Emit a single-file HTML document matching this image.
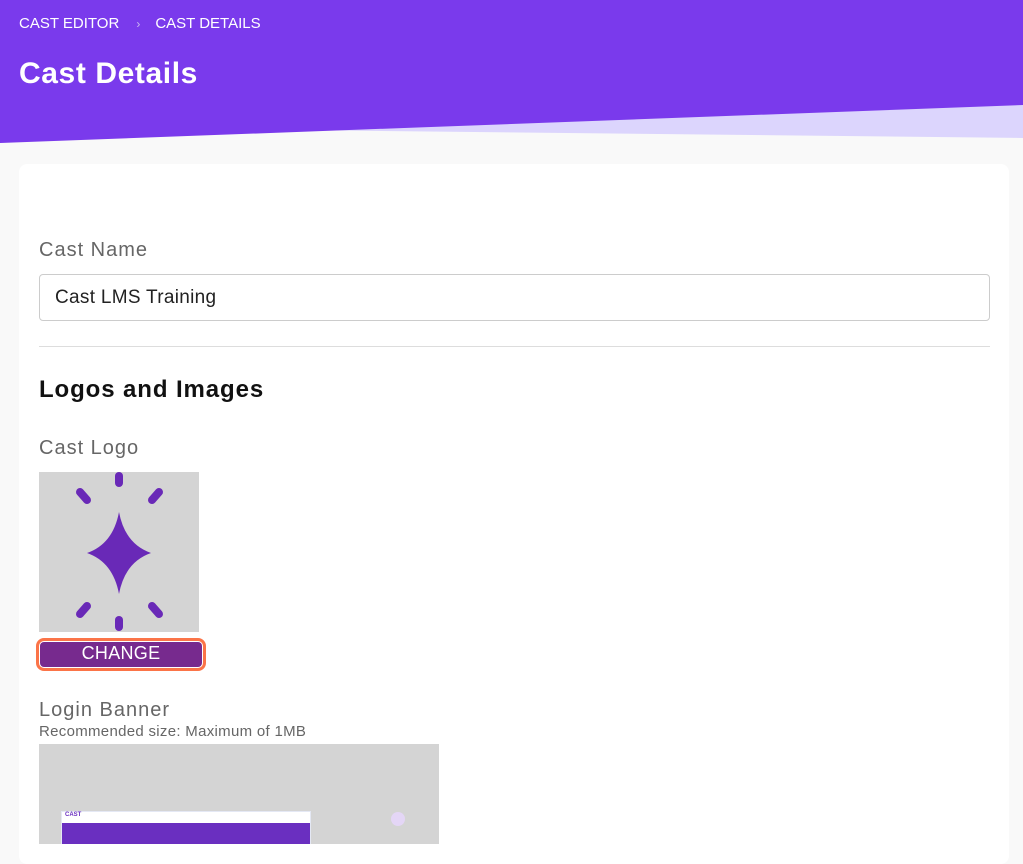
<!DOCTYPE html>
<html><head><style>
*{box-sizing:border-box;margin:0;padding:0}
body{width:1023px;height:843px;overflow:hidden;background:#f9f9f9;font-family:"Liberation Sans",sans-serif;position:relative}
.hdr{position:absolute;left:0;top:0;width:1023px;height:150px}
.bc{position:absolute;left:19px;top:15px;color:#fff;font-size:15px;letter-spacing:0}
.bc span{color:#c9b8f0;margin:0 15px 0 17px;font-size:12px}
h1{position:absolute;left:19px;top:57px;color:#fff;font-size:30px;font-weight:bold;letter-spacing:0.6px}
.card{position:absolute;left:19px;top:164px;width:990px;height:700px;background:#fff;border-radius:8px}
.lbl{position:absolute;left:39px;color:#666;font-size:20px;letter-spacing:1px}
.inp{position:absolute;left:39px;top:274px;width:951px;height:47px;border:1px solid #ccc;border-radius:4px;padding:0 15px;line-height:45px;font-size:19px;color:#222;letter-spacing:0.3px}
.hr{position:absolute;left:39px;top:346px;width:951px;height:1px;background:#ddd}
h2{position:absolute;left:39px;top:376px;font-size:24px;font-weight:bold;color:#111;letter-spacing:0.9px}
.logo{position:absolute;left:39px;top:472px;width:160px;height:160px;background:#d4d4d4}
.btn{position:absolute;left:36px;top:638px;width:170px;height:33px;border:3px solid #fb7448;border-radius:8px;padding:1px}
.btn div{background:#772a8e;width:100%;height:100%;border-radius:4px;color:#fff;font-size:18px;text-align:center;line-height:23px;letter-spacing:0.3px}
.banner{position:absolute;left:39px;top:744px;width:400px;height:100px;background:#d4d4d4;overflow:hidden}
</style></head><body>
<svg class="hdr" viewBox="0 0 1023 150">
<rect width="1023" height="150" fill="#f9f9f9"/>
<polygon points="0,0 1023,0 1023,138 200,129 0,143" fill="#dcd5fd"/>
<polygon points="0,0 1023,0 1023,105 0,143" fill="#7a3aec"/>
</svg>
<div class="bc">CAST EDITOR<span>›</span>CAST DETAILS</div>
<h1>Cast Details</h1>
<div class="card"></div>
<div class="lbl" style="top:239px">Cast Name</div>
<div class="inp">Cast LMS Training</div>
<div class="hr"></div>
<h2>Logos and Images</h2>
<div class="lbl" style="top:437px">Cast Logo</div>
<div class="logo"><svg width="160" height="160" viewBox="0 0 160 160">
<path d="M80 40 Q86 72 112 81 Q86 90 80 122 Q74 90 48 81 Q74 72 80 40Z" fill="#6929b7"/>
<g stroke="#6929b7" stroke-width="8" stroke-linecap="round">
<line x1="80" y1="4" x2="80" y2="11"/><line x1="80" y1="148" x2="80" y2="155"/>
<line x1="41" y1="20" x2="48" y2="28"/><line x1="113" y1="28" x2="120" y2="20"/>
<line x1="41" y1="142" x2="48" y2="134"/><line x1="113" y1="134" x2="120" y2="142"/>
</g></svg></div>
<div class="btn"><div>CHANGE</div></div>
<div class="lbl" style="top:699px">Login Banner</div>
<div style="position:absolute;left:39px;top:723px;font-size:15px;color:#666;letter-spacing:0.3px">Recommended size: Maximum of 1MB</div>
<div class="banner">
<div style="position:absolute;left:22px;top:67px;width:250px;height:40px;background:#6a2fc0;border:1px solid #e4e8f4"><div style="height:11px;background:#fff;font-size:6px;color:#6a2fc0;font-weight:bold;padding-left:3px">CAST</div></div>
<div style="position:absolute;left:352px;top:68px;width:14px;height:14px;border-radius:50%;background:#e4d6f6"></div>
</div>
</body></html>
